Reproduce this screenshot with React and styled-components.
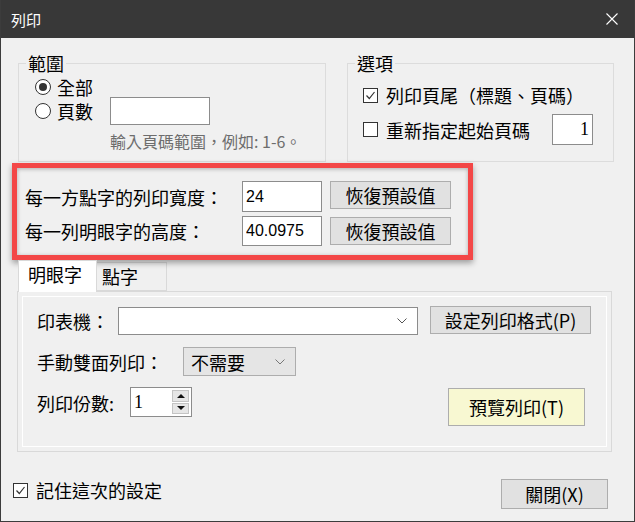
import React from "react";
import styled, { createGlobalStyle } from "styled-components";

const FONT = `"Noto Sans CJK TC", "Liberation Sans", sans-serif`;

const GlobalStyle = createGlobalStyle`
  html, body {
    margin: 0;
    padding: 0;
    background: #f0f0f0;
  }
  * {
    box-sizing: border-box;
  }
`;

const Window = styled.div`
  width: 635px;
  height: 522px;
  display: flex;
  flex-direction: column;
  background: #f0f0f0;
  border: 1px solid #3c3c3c;
  border-top: none;
  font-family: ${FONT};
  font-size: 18px;
  color: #000;
  overflow: hidden;
`;

const TitleBar = styled.div`
  flex: none;
  height: 38px;
  margin: 0 -1px;
  padding: 0 17px 0 11px;
  display: flex;
  align-items: center;
  justify-content: space-between;
  background: #383838;
  color: #fff;
  font-size: 15px;
`;

const GroupRow = styled.div`
  display: flex;
  gap: 21px;
  margin: 14px 0 0 17px;
`;

const Group = styled.fieldset`
  margin: 0;
  padding: 0;
  min-width: 0;
  width: ${p => p.$w}px;
  height: 110px;
  border: 1px solid #dcdcdc;
`;

const Legend = styled.legend`
  margin-left: 7px;
  padding: 0 2px;
  font-size: 18px;
  line-height: 22px;
`;

const GroupBody = styled.div`
  display: flex;
  flex-direction: column;
  padding: ${p => p.$pt}px ${p => p.$pr || 0}px 0 ${p => p.$pl}px;
`;

const OptionRow = styled.div`
  display: flex;
  align-items: center;
  height: ${p => p.$h}px;
  margin-top: ${p => p.$mt || 0}px;
`;

const OptionLabel = styled.label`
  display: flex;
  align-items: center;
  gap: ${p => p.$gap || 6}px;
  width: ${p => (p.$w ? `${p.$w}px` : "auto")};
  line-height: 20px;
  white-space: nowrap;
`;

const FooterCheck = styled(OptionLabel)`
  align-self: flex-start;
  margin-top: 1px;
`;

const Radio = styled.span`
  flex: none;
  width: 16px;
  height: 16px;
  border-radius: 50%;
  border: 1px solid #333;
  background: #fff;
  display: grid;
  place-items: center;
  &::after {
    content: "";
    width: 8px;
    height: 8px;
    border-radius: 50%;
    background: ${p => (p.$checked ? "#333" : "transparent")};
  }
`;

const CheckBox = styled.span`
  flex: none;
  width: 15px;
  height: 15px;
  border: 1px solid #333;
  background: #fff;
  display: grid;
  place-items: center;
`;

const TextBox = styled.input`
  width: ${p => p.$w}px;
  height: ${p => p.$h}px;
  margin: 0 0 0 ${p => p.$ml || 0}px;
  padding: 0 3px;
  border: 1px solid #8c8c8c;
  background: #fff;
  font-family: ${p => (p.$serif ? `"Liberation Serif", serif` : `"Liberation Sans", sans-serif`)};
  font-size: ${p => (p.$serif ? 18 : 16)}px;
  text-align: ${p => p.$align || "left"};
  color: #000;
  outline: none;
`;

const Hint = styled.div`
  margin: 6px 0 0 75px;
  color: #6d6d6d;
  font-size: 16px;
  line-height: 20px;
  white-space: nowrap;
`;

const Highlight = styled.section`
  position: relative;
  z-index: 1;
  margin: 1px 0 0 11px;
  width: 461px;
  height: 97px;
  border: 5px solid #f34747;
  box-shadow: 0 3px 6px rgba(0, 0, 0, 0.35), inset 0 1px 4px rgba(0, 0, 0, 0.28);
  padding: 13px 0 0 8px;
  display: grid;
  grid-template-columns: 209px 80px 121px;
  grid-template-rows: 31px 30px;
  column-gap: 8px;
  row-gap: 4px;
  align-items: center;
`;

const FieldLabel = styled.span`
  line-height: 20px;
  white-space: nowrap;
`;

const Button = styled.button`
  width: ${p => p.$w}px;
  height: ${p => p.$h || 28}px;
  margin: ${p => p.$mt || 0}px ${p => p.$mr || 0}px 0 ${p => (p.$ml === "auto" ? "auto" : `${p.$ml || 0}px`)};
  padding: 0;
  align-self: flex-start;
  border: 1px solid #adadad;
  background: ${p => (p.$yellow ? "#f8f8d2" : "#e1e1e1")};
  font-family: ${FONT};
  font-size: 18px;
  line-height: 20px;
  color: #000;
  white-space: nowrap;
`;

const TabStrip = styled.div`
  display: flex;
  align-items: flex-end;
  height: 31px;
  margin-left: 17px;
`;

const Tab = styled.div`
  position: relative;
  z-index: ${p => (p.$active ? 1 : 0)};
  width: ${p => p.$w}px;
  height: ${p => (p.$active ? 32 : 29)}px;
  margin-bottom: ${p => (p.$active ? -1 : 0)}px;
  padding: 0 0 ${p => (p.$active ? 5 : 2)}px ${p => p.$pl}px;
  display: flex;
  align-items: center;
  background: ${p => (p.$active ? "#fff" : "#f0f0f0")};
  border: 1px solid #d9d9d9;
  border-bottom: ${p => (p.$active ? "none" : "1px solid #d9d9d9")};
  border-left: ${p => (p.$active ? "1px solid #d9d9d9" : "none")};
  line-height: 20px;
`;

const Panel = styled.div`
  margin-left: 16px;
  width: 595px;
  height: 161px;
  border: 1px solid #d9d9d9;
  padding: 4px;
`;

const Page = styled.div`
  height: 100%;
  border: 1px solid #fff;
  padding: 9px 0 0 14px;
  display: flex;
  flex-direction: column;
`;

const FormRow = styled.div`
  display: flex;
  align-items: ${p => p.$align || "center"};
  height: ${p => p.$h}px;
  margin-top: ${p => p.$mt || 0}px;
`;

const RowLabel = styled.span`
  flex: none;
  width: ${p => p.$w}px;
  line-height: ${p => p.$lh || 20}px;
  white-space: nowrap;
`;

const Combo = styled.div`
  flex: none;
  width: ${p => p.$w}px;
  height: ${p => p.$h}px;
  margin-top: ${p => p.$mt || 0}px;
  padding: 0 10px 0 7px;
  display: flex;
  align-items: center;
  justify-content: space-between;
  border: 1px solid ${p => (p.$flat ? "#adadad" : "#8c8c8c")};
  background: ${p => (p.$flat ? "#e5e5e5" : "#fff")};
  line-height: 20px;
`;

const Spin = styled.div`
  flex: none;
  width: 62px;
  height: 30px;
  padding: 2px 2px 2px 3px;
  display: flex;
  border: 1px solid #8c8c8c;
  background: #fff;
`;

const SpinValue = styled.span`
  flex: 1;
  font-family: "Liberation Serif", serif;
  font-size: 18px;
  line-height: 24px;
`;

const SpinButtons = styled.div`
  width: 17px;
  display: flex;
  flex-direction: column;
  gap: 1px;
`;

const SpinButton = styled.span`
  flex: 1;
  display: grid;
  place-items: center;
  background: #e6e6e6;
  border: 1px solid #c4c4c4;
  &::after {
    content: "";
    border-left: 4px solid transparent;
    border-right: 4px solid transparent;
    border-${p => (p.$down ? "top" : "bottom")}: 4px solid #111;
  }
`;

const Footer = styled.div`
  display: flex;
  align-items: center;
  justify-content: space-between;
  height: 30px;
  margin-top: 27px;
  padding: 0 26px 0 12px;
`;

function Check() {
  return (
    <svg width="11" height="11" viewBox="0 0 11 11">
      <polyline points="1.5,5.5 4.3,8.5 9.5,2" fill="none" stroke="#333" strokeWidth="1.2" />
    </svg>
  );
}

function Chevron({ color = "#555" }) {
  return (
    <svg width="10" height="6" viewBox="0 0 10 6">
      <polyline points="0.5,0.5 5,5 9.5,0.5" fill="none" stroke={color} strokeWidth="1" />
    </svg>
  );
}

export default function App() {
  return (
    <>
      <GlobalStyle />
      <Window>
        <TitleBar>
          <span>列印</span>
          <svg width="12" height="12" viewBox="0 0 12 12">
            <path d="M0.5 0.5 L11.5 11.5 M11.5 0.5 L0.5 11.5" stroke="#fff" strokeWidth="1.1" />
          </svg>
        </TitleBar>

        <GroupRow>
          <Group $w={308}>
            <Legend>範圍</Legend>
            <GroupBody $pt={2} $pl={16}>
              <OptionRow $h={21}>
                <OptionLabel>
                  <Radio $checked />
                  全部
                </OptionLabel>
              </OptionRow>
              <OptionRow $h={28}>
                <OptionLabel $w={75}>
                  <Radio />
                  頁數
                </OptionLabel>
                <TextBox $w={100} $h={28} defaultValue="" />
              </OptionRow>
              <Hint>輸入頁碼範圍，例如: 1-6。</Hint>
            </GroupBody>
          </Group>

          <Group $w={267}>
            <Legend>選項</Legend>
            <GroupBody $pt={9} $pl={15} $pr={20}>
              <OptionRow $h={24}>
                <OptionLabel $gap={8}>
                  <CheckBox>
                    <Check />
                  </CheckBox>
                  列印頁尾（標題、頁碼）
                </OptionLabel>
              </OptionRow>
              <OptionRow $h={31} $mt={7}>
                <OptionLabel $gap={8}>
                  <CheckBox />
                  重新指定起始頁碼
                </OptionLabel>
                <TextBox $w={41} $h={31} $ml={22} $serif $align="right" defaultValue="1" />
              </OptionRow>
            </GroupBody>
          </Group>
        </GroupRow>

        <Highlight>
          <FieldLabel>每一方點字的列印寬度：</FieldLabel>
          <TextBox $w={80} $h={31} defaultValue="24" />
          <Button $w={121}>恢復預設值</Button>
          <FieldLabel>每一列明眼字的高度：</FieldLabel>
          <TextBox $w={80} $h={30} defaultValue="40.0975" />
          <Button $w={121} $mt={1}>恢復預設值</Button>
        </Highlight>

        <TabStrip>
          <Tab $active $w={79} $pl={9}>明眼字</Tab>
          <Tab $w={70} $pl={5}>點字</Tab>
        </TabStrip>

        <Panel>
          <Page>
            <FormRow $h={29}>
              <RowLabel $w={81}>印表機：</RowLabel>
              <Combo $w={300} $h={28} $mt={1}>
                <span />
                <Chevron />
              </Combo>
              <Button $w={161} $ml={12}>設定列印格式(P)</Button>
            </FormRow>

            <FormRow $h={29} $mt={12}>
              <RowLabel $w={146}>手動雙面列印：</RowLabel>
              <Combo $w={113} $h={29} $flat>
                <span>不需要</span>
                <Chevron color="#777" />
              </Combo>
            </FormRow>

            <FormRow $h={39} $mt={11} $align="flex-start">
              <RowLabel $w={93} $lh={32}>列印份數:</RowLabel>
              <Spin>
                <SpinValue>1</SpinValue>
                <SpinButtons>
                  <SpinButton />
                  <SpinButton $down />
                </SpinButtons>
              </Spin>
              <Button $w={137} $h={38} $mt={1} $ml="auto" $mr={21} $yellow>
                預覽列印(T)
              </Button>
            </FormRow>
          </Page>
        </Panel>

        <Footer>
          <FooterCheck $gap={8}>
            <CheckBox>
              <Check />
            </CheckBox>
            記住這次的設定
          </FooterCheck>
          <Button $w={107} $h={30}>關閉(X)</Button>
        </Footer>
      </Window>
    </>
  );
}
